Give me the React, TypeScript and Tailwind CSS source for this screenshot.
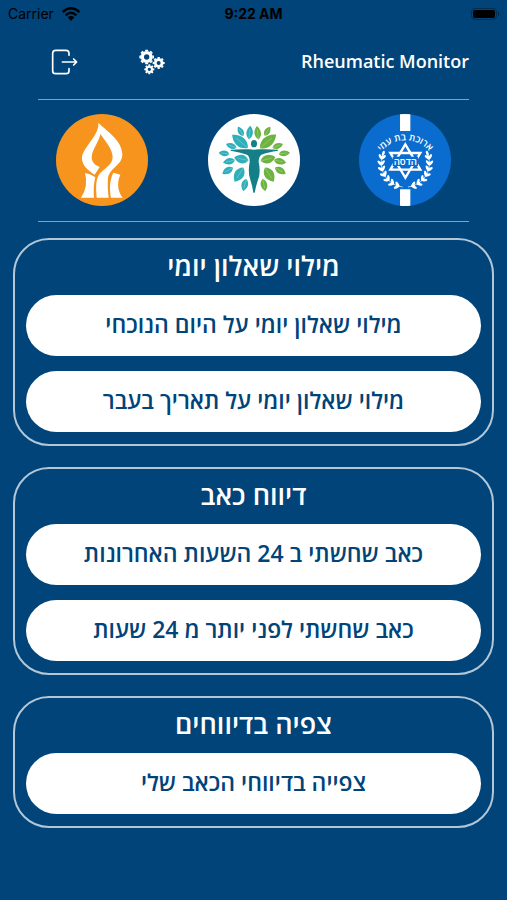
interface Section {
    title: string;
    actions: string[];
}

interface GearProps {
    cx: number;
    cy: number;
    body: number;
    hole: number;
    tooth: number;
}

interface LeafProps {
    x: number;
    y: number;
    length: number;
    width: number;
    angle: number;
    fill: string;
}

const sections: Section[] = [
    {
        title: 'מילוי שאלון יומי',
        actions: ['מילוי שאלון יומי על היום הנוכחי', 'מילוי שאלון יומי על תאריך בעבר'],
    },
    {
        title: 'דיווח כאב',
        actions: ['כאב שחשתי ב 24 השעות האחרונות', 'כאב שחשתי לפני יותר מ 24 שעות'],
    },
    {
        title: 'צפיה בדיווחים',
        actions: ['צפייה בדיווחי הכאב שלי'],
    },
];

const toothAngles = [0, 45, 90, 135, 180, 225, 270, 315];

function Gear({ cx, cy, body, hole, tooth }: GearProps) {
    return (
        <g transform={`translate(${cx} ${cy})`}>
            <circle r={(body + hole) / 2} fill="none" stroke="white" strokeWidth={body - hole} />
            {toothAngles.map(angle => (
                <path
                    key={angle}
                    transform={`rotate(${angle})`}
                    d={`M${-tooth} ${-body + 1}L${-tooth + 1} ${-body - 4}H${tooth - 1}L${tooth} ${-body + 1}Z`}
                    fill="white"
                />
            ))}
        </g>
    );
}

function GearsIcon() {
    return (
        <svg viewBox="412 144 84 84" className="size-7" aria-hidden="true">
            <Gear cx={438} cy={171} body={18} hole={8} tooth={5} />
            <Gear cx={474} cy={189} body={14} hole={6} tooth={4} />
            <Gear cx={446} cy={208} body={11} hole={5} tooth={3.5} />
        </svg>
    );
}

function LogoutIcon() {
    return (
        <svg viewBox="150 144 84 84" className="size-7" fill="none" stroke="white" strokeWidth="5" strokeLinecap="round" strokeLinejoin="round" aria-hidden="true">
            <path d="M207 166V160Q207 151 198 151H167Q158 151 158 160V212Q158 221 167 221H198Q207 221 207 212V206" />
            <path d="M187 186H230M221 177L230 186L221 195" />
        </svg>
    );
}

function WifiIcon() {
    return (
        <svg viewBox="0 0 54 42" className="h-[14px] w-[18px]" fill="none" stroke="black" strokeWidth="7" aria-hidden="true">
            <path d="M2 15Q27 -7 52 15" />
            <path d="M11 25Q27 10 43 25" />
            <path d="M17 31Q27 22 37 31L27 42Z" fill="black" stroke="none" />
        </svg>
    );
}

function FlameLogo() {
    return (
        <svg viewBox="20 28 276 276" className="size-[92px]" role="img" aria-label="Flame">
            <circle cx="158" cy="166" r="138" fill="#f7941e" />
            <path
                fill="white"
                d="M147 54C166 75 219 105 219 149C219 184 180 188 176 222C174 242 176 262 178 279H142C141 258 137 232 148 212C158 194 189 184 190 158C190 132 165 106 153 88C149 112 128 134 127 158C127 174 139 183 151 187L136 210C114 196 98 182 98 160C99 128 151 93 147 54Z"
            />
            <path fill="white" d="M107 205Q124 208 138 218Q131 244 134 279H95Q118 244 107 205Z" />
            <path fill="white" d="M192 204L213 210C202 235 205 259 220 279H185C181 257 179 231 192 204Z" />
        </svg>
    );
}

function Leaf({ x, y, length, width, angle, fill }: LeafProps) {
    const half = length / 2;
    return (
        <g transform={`translate(${x} ${y}) rotate(${angle})`}>
            <path
                fill={fill}
                d={`M${-half} 0C${-half / 2} ${-width} ${half / 3} ${-width} ${half} 0C${half / 3} ${width} ${-half / 2} ${width} ${-half} 0Z`}
            />
            <path d={`M${-half} 0H${half / 2}`} stroke="white" strokeWidth="1" opacity="0.7" />
        </g>
    );
}

const tealLeaves = [
    { x: 122, y: 80, length: 32, width: 11, angle: -120 },
    { x: 149, y: 84, length: 41, width: 13, angle: -84 },
    { x: 120, y: 110, length: 62, width: 20, angle: -140 },
    { x: 94, y: 124, length: 34, width: 11, angle: -160 },
    { x: 72, y: 146, length: 32, width: 11, angle: -174 },
    { x: 124, y: 163, length: 44, width: 17, angle: -168 },
    { x: 87, y: 170, length: 37, width: 13, angle: 168 },
    { x: 83, y: 198, length: 37, width: 13, angle: 150 },
    { x: 117, y: 210, length: 50, width: 19, angle: 122 },
    { x: 134, y: 241, length: 38, width: 13, angle: 104 },
];

const greenLeaves = [
    { x: 202, y: 80, length: 32, width: 11, angle: -58 },
    { x: 173, y: 84, length: 41, width: 13, angle: -97 },
    { x: 204, y: 110, length: 64, width: 20, angle: -40 },
    { x: 233, y: 124, length: 34, width: 11, angle: -20 },
    { x: 253, y: 146, length: 34, width: 11, angle: -6 },
    { x: 204, y: 163, length: 46, width: 17, angle: -14 },
    { x: 240, y: 170, length: 38, width: 13, angle: 12 },
    { x: 241, y: 198, length: 37, width: 13, angle: 30 },
    { x: 208, y: 210, length: 50, width: 19, angle: 58 },
    { x: 192, y: 241, length: 38, width: 13, angle: 78 },
];

function TreeLogo() {
    return (
        <svg viewBox="24 28 276 276" className="size-[92px]" role="img" aria-label="Tree">
            <circle cx="162" cy="166" r="138" fill="white" />
            {tealLeaves.map(leaf => <Leaf key={`${leaf.x}-${leaf.y}`} {...leaf} fill="#2fafb9" />)}
            {greenLeaves.map(leaf => <Leaf key={`${leaf.x}-${leaf.y}`} {...leaf} fill="#6cb33f" />)}
            <ellipse cx="162" cy="117" rx="9" ry="11" fill="#147f86" />
            <path
                fill="#147f86"
                d="M92 135Q122 133 148 134Q162 136 176 134Q202 133 234 135V138Q204 142 184 150Q176 156 176 172Q183 204 174 225Q168 243 164 264H160Q157 243 151 225Q143 204 149 172Q150 156 141 150Q120 142 92 138Z"
            />
        </svg>
    );
}

// degrees around the star, from the bottom of the branch to its tip
const wreathAngles = [74, 60, 46, 32, 18, 4, -10];

function WreathBranch() {
    return (
        <g transform="translate(166 175)">
            <path d="M8 72A72 72 0 0 0 68 -24" fill="none" stroke="white" strokeWidth="2" />
            {wreathAngles.map(angle => (
                <g key={angle} transform={`rotate(${angle}) translate(72 0)`} fill="white">
                    <ellipse cx="7" rx="9" ry="4" transform="rotate(-50)" />
                    <ellipse cx="-7" rx="9" ry="4" transform="rotate(50)" />
                    <circle cx="0" cy="-6" r="3" />
                </g>
            ))}
            <ellipse cx="66" cy="-29" rx="8" ry="4" transform="rotate(-110 66 -29)" fill="white" />
        </g>
    );
}

function StarLogo() {
    return (
        <svg viewBox="27 28 276 276" className="size-[92px]" role="img" aria-label="הדסה">
            <circle cx="165" cy="166" r="138" fill="#096cce" />
            <path d="M150 29Q165 27 181 29V79H150ZM150 254H181V303Q165 305 150 303Z" fill="white" />
            <path id="motto-arc" d="M90 146A93 93 0 0 1 242 146" fill="none" />
            <text fill="white" fontFamily="Open Sans, DejaVu Sans, sans-serif" fontSize="28" fontWeight="600" textAnchor="middle">
                <textPath href="#motto-arc" startOffset="50%">ארוכת בת עמי</textPath>
            </text>
            <g fill="none" stroke="white" strokeWidth="7">
                <path d="M166 119L211 195H121Z" />
                <path d="M166 219L121 145H211Z" />
            </g>
            <rect x="128" y="156" width="76" height="28" fill="#096cce" />
            <text x="166" y="180" fill="white" fontFamily="Open Sans, DejaVu Sans, sans-serif" fontSize="29" fontWeight="600" textAnchor="middle">הדסה</text>
            <WreathBranch />
            <g transform="translate(332 0) scale(-1 1)">
                <WreathBranch />
            </g>
        </svg>
    );
}

function StatusBar() {
    return (
        <div className="grid h-7 grid-cols-3 items-center px-2 font-['Inter',sans-serif] text-sm leading-7 text-black">
            <div className="flex items-center gap-2">
                <span>Carrier</span>
                <WifiIcon />
            </div>
            <span className="text-center font-bold">9:22 AM</span>
            <div className="flex items-center justify-end gap-px">
                <div className="rounded-[4px] border border-black/30 p-px">
                    <div className="h-2 w-[22px] rounded-[2px] bg-black" />
                </div>
                <div className="h-1 w-px bg-black/40" />
            </div>
        </div>
    );
}

export default function App() {
    return (
        <div className="min-h-screen bg-[#004479] font-['Open_Sans','DejaVu_Sans',sans-serif]">
            <StatusBar />
            <header className="mx-[38px] flex h-[71px] items-center justify-between pl-3">
                <div className="flex items-center gap-[60px] pb-1">
                    <button type="button" aria-label="Log out">
                        <LogoutIcon />
                    </button>
                    <button type="button" aria-label="Settings">
                        <GearsIcon />
                    </button>
                </div>
                <h1 className="pb-1.5 text-lg leading-6 font-semibold text-white">Rheumatic Monitor</h1>
            </header>

            <div className="mx-[38px] flex items-center justify-between border-y border-white/50 px-[18px] pt-[14px] pb-[15px]">
                <FlameLogo />
                <TreeLogo />
                <StarLogo />
            </div>

            <main dir="rtl" className="flex flex-col gap-[21px] px-[13px] py-4">
                {sections.map(section => (
                    <section key={section.title} className="rounded-[36px] border-2 border-white/70 px-[11px] pb-3">
                        <h2 className="h-[55px] text-center text-[27px] leading-[52px] font-semibold text-white">{section.title}</h2>
                        <div className="flex flex-col gap-[15px]">
                            {section.actions.map(action => (
                                <button
                                    key={action}
                                    type="button"
                                    className="h-[61px] rounded-full bg-white pb-0.5 text-[23px] font-semibold text-[#004479]"
                                >
                                    {action}
                                </button>
                            ))}
                        </div>
                    </section>
                ))}
            </main>
        </div>
    );
}
